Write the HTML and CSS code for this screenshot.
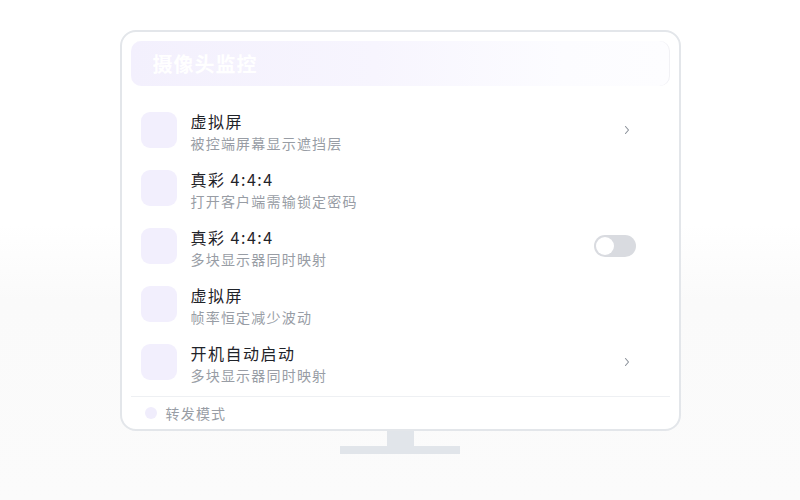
FILE: index.html
```html
<!DOCTYPE html>
<html lang="zh-CN">
<head>
<meta charset="utf-8">
<title>摄像头监控</title>
<link rel="stylesheet" href="styles.css">
</head>
<body>
<div class="page">
  <div class="monitor">
    <div class="screen">
      <div class="header"><span class="header-title">摄像头监控</span></div>
      <div class="list">
        <div class="row">
          <div class="icon"></div>
          <div class="texts"><div class="title">虚拟屏</div><div class="sub">被控端屏幕显示遮挡层</div></div>
          <svg class="chev" width="8" height="12" viewBox="0 0 8 12"><path d="M2.5 2.5 L5.5 6 L2.5 9.5" fill="none" stroke="#8a9099" stroke-width="1.1" stroke-linecap="round" stroke-linejoin="round"/></svg>
        </div>
        <div class="row">
          <div class="icon"></div>
          <div class="texts"><div class="title">真彩 4:4:4</div><div class="sub">打开客户端需输锁定密码</div></div>
        </div>
        <div class="row">
          <div class="icon"></div>
          <div class="texts"><div class="title">真彩 4:4:4</div><div class="sub">多块显示器同时映射</div></div>
          <div class="toggle"><div class="knob"></div></div>
        </div>
        <div class="row">
          <div class="icon"></div>
          <div class="texts"><div class="title">虚拟屏</div><div class="sub">帧率恒定减少波动</div></div>
        </div>
        <div class="row">
          <div class="icon"></div>
          <div class="texts"><div class="title">开机自动启动</div><div class="sub">多块显示器同时映射</div></div>
          <svg class="chev" width="8" height="12" viewBox="0 0 8 12"><path d="M2.5 2.5 L5.5 6 L2.5 9.5" fill="none" stroke="#8a9099" stroke-width="1.1" stroke-linecap="round" stroke-linejoin="round"/></svg>
        </div>
      </div>
      <div class="footer"><span class="dot"></span><span class="footer-text">转发模式</span></div>
    </div>
    <div class="neck"></div>
    <div class="base"></div>
  </div>
</div>
</body>
</html>
```
FILE: styles.css
```css
html, body {
  margin: 0;
  padding: 0;
}
body {
  width: 800px;
  height: 500px;
  background: linear-gradient(180deg, #ffffff 0%, #ffffff 45%, #fafafa 60%, #fbfbfb 100%);
  font-family: "Noto Sans CJK SC", "Noto Sans", sans-serif;
  overflow: hidden;
}
.page {
  display: flex;
  justify-content: center;
  padding-top: 30px;
}
.monitor {
  display: flex;
  flex-direction: column;
  align-items: center;
  width: 561px;
}
.screen {
  box-sizing: border-box;
  width: 561px;
  height: 401px;
  border: 2px solid #e3e6ea;
  border-radius: 16px;
  background: #ffffff;
  padding: 9px 9px 0 9px;
  display: flex;
  flex-direction: column;
}
.header {
  height: 45px;
  border-radius: 10px;
  background: linear-gradient(90deg, #f3f0fd 0%, #f7f5fe 45%, #fcfcff 80%, #fdfdff 100%);
  display: flex;
  align-items: center;
  padding-left: 22px;
  box-shadow: inset -1px 0 0 #f1f1f5;
}
.header-title {
  color: #ffffff;
  font-size: 20px;
  font-weight: 700;
  letter-spacing: 1px;
}
.list {
  margin-top: 15px;
  padding-bottom: 5px;
  border-bottom: 1px solid #eef0f3;
}
.row {
  height: 58px;
  display: flex;
  align-items: center;
  padding: 0 34px 0 10px;
}
.icon {
  width: 36px;
  height: 36px;
  border-radius: 9px;
  background: #f2effd;
  flex: none;
}
.texts {
  flex: 1;
  margin-left: 14px;
  padding-top: 3px;
  display: flex;
  flex-direction: column;
}
.title {
  font-size: 16px;
  line-height: 22px;
  color: #1f2329;
  letter-spacing: 1.5px;
}
.sub {
  font-size: 14px;
  line-height: 20px;
  margin-top: 1px;
  color: #989da5;
  letter-spacing: 1.2px;
}
.chev {
  margin-right: 5px;
  flex: none;
}
.toggle {
  width: 42px;
  height: 22px;
  border-radius: 11px;
  background: #d9dbe0;
  display: flex;
  align-items: center;
  padding: 0 2px;
  box-sizing: border-box;
}
.knob {
  width: 18px;
  height: 18px;
  border-radius: 50%;
  background: #ffffff;
}
.footer {
  height: 32px;
  display: flex;
  align-items: center;
  padding-left: 14px;
}
.dot {
  width: 12px;
  height: 12px;
  border-radius: 50%;
  background: #f0edfc;
}
.footer-text {
  margin-left: 9px;
  font-size: 14px;
  color: #989da5;
  letter-spacing: 1.2px;
}
.neck {
  width: 27px;
  height: 15px;
  background: #e1e5ea;
}
.base {
  width: 120px;
  height: 8px;
  background: #e1e5ea;
}
```
